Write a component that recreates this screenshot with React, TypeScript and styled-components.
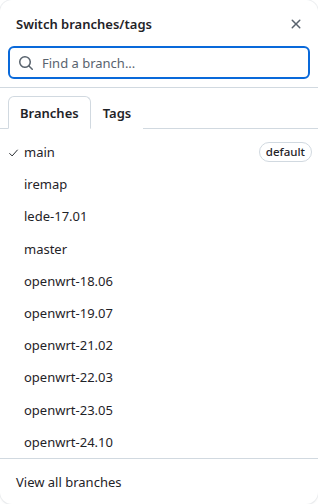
import React from "react";
import styled, { createGlobalStyle } from "styled-components";

const Global = createGlobalStyle`
  html, body { margin: 0; padding: 0; background: #ffffff; }
  * { box-sizing: border-box; }
  body { font-family: "Noto Sans", "Segoe UI", sans-serif; color: #1f2328; }
`;

const Panel = styled.div`
  width: 318px;
  height: 504px;
  background: #fff;
  border-radius: 12px;
  box-shadow: 0 0 0 1px rgba(208, 215, 222, 0.35), 0 1px 3px rgba(0,0,0,0.06);
  display: flex;
  flex-direction: column;
  overflow: hidden;
`;

const Header = styled.div`
  display: flex;
  align-items: center;
  justify-content: space-between;
  padding: 12px 14px 0 16px;
  height: 36px;
`;

const Title = styled.h1`
  margin: 0;
  font-size: 13px;
  font-weight: 600;
  line-height: 20px;
`;

const CloseButton = styled.button`
  border: 0;
  background: transparent;
  padding: 0;
  width: 16px;
  height: 16px;
  display: flex;
  align-items: center;
  justify-content: center;
  color: #59636e;
`;

const SearchWrap = styled.div`
  padding: 10px 8px 8px 8px;
  border-bottom: 1px solid #d1d9e0;
`;

const SearchBox = styled.label`
  display: flex;
  align-items: center;
  gap: 8px;
  height: 33px;
  padding: 0 8px;
  border: 2px solid #0969da;
  border-radius: 6px;
  color: #59636e;
`;

const SearchInput = styled.span`
  font-size: 13px;
  color: #59636e;
  line-height: 20px;
`;

const Tabs = styled.div`
  display: flex;
  align-items: flex-end;
  padding: 8px 8px 0 8px;
  border-bottom: 1px solid #d1d9e0;
`;

const Tab = styled.div<{ $active?: boolean }>`
  height: 33px;
  padding: 0 11px;
  display: flex;
  align-items: center;
  font-size: 13px;
  font-weight: 600;
  color: #1f2328;
  margin-bottom: -1px;
  border: 1px solid ${p => (p.$active ? "#d1d9e0" : "transparent")};
  border-bottom-color: ${p => (p.$active ? "#fff" : "transparent")};
  border-radius: 6px 6px 0 0;
  background: #fff;
`;

const List = styled.ul`
  list-style: none;
  margin: 0;
  padding: 7px 0 0 0;
  flex: 1;
`;

const Row = styled.li`
  display: flex;
  align-items: center;
  height: 32.2px;
  padding: 0 6px 0 8px;
  font-size: 13px;
`;

const CheckSlot = styled.span`
  width: 16px;
  display: flex;
  align-items: center;
  color: #1f2328;
`;

const Name = styled.span`
  flex: 1;
`;

const Badge = styled.span`
  font-size: 11.5px;
  font-weight: 500;
  line-height: 18px;
  padding: 0 6px;
  border: 1px solid #d1d9e0;
  border-radius: 999px;
  color: #1f2328;
`;

const Footer = styled.div`
  border-top: 1px solid #d1d9e0;
  height: 46px;
  display: flex;
  align-items: center;
  padding: 0 16px;
  font-size: 13px;
  color: #1f2328;
`;

const branches = [
  "main",
  "iremap",
  "lede-17.01",
  "master",
  "openwrt-18.06",
  "openwrt-19.07",
  "openwrt-21.02",
  "openwrt-22.03",
  "openwrt-23.05",
  "openwrt-24.10",
];

export default function App() {
  return (
    <>
      <Global />
      <Panel>
        <Header>
          <Title>Switch branches/tags</Title>
          <CloseButton aria-label="Close">
            <svg width="16" height="16" viewBox="0 0 16 16" fill="currentColor">
              <path d="M3.72 3.72a.75.75 0 0 1 1.06 0L8 6.94l3.22-3.22a.749.749 0 0 1 1.275.326.749.749 0 0 1-.215.734L9.06 8l3.22 3.22a.749.749 0 0 1-.326 1.275.749.749 0 0 1-.734-.215L8 9.06l-3.22 3.22a.751.751 0 0 1-1.042-.018.751.751 0 0 1-.018-1.042L6.94 8 3.72 4.780a.75.75 0 0 1 0-1.06Z" />
            </svg>
          </CloseButton>
        </Header>
        <SearchWrap>
          <SearchBox>
            <svg width="16" height="16" viewBox="0 0 16 16" fill="currentColor">
              <path d="M10.68 11.74a6 6 0 0 1-7.922-8.982 6 6 0 0 1 8.982 7.922l3.04 3.04a.749.749 0 0 1-.326 1.275.749.749 0 0 1-.734-.215ZM11.5 7a4.499 4.499 0 1 0-8.997 0A4.499 4.499 0 0 0 11.5 7Z" />
            </svg>
            <SearchInput>Find a branch...</SearchInput>
          </SearchBox>
        </SearchWrap>
        <Tabs>
          <Tab $active>Branches</Tab>
          <Tab>Tags</Tab>
        </Tabs>
        <List>
          {branches.map((b, i) => (
            <Row key={b}>
              <CheckSlot>
                {i === 0 && (
                  <svg width="11" height="11" viewBox="0 0 16 16" fill="none" stroke="currentColor" strokeWidth="1.4">
                    <path d="M2 9l4 4 8-9" />
                  </svg>
                )}
              </CheckSlot>
              <Name>{b}</Name>
              {i === 0 && <Badge>default</Badge>}
            </Row>
          ))}
        </List>
        <Footer>View all branches</Footer>
      </Panel>
    </>
  );
}
